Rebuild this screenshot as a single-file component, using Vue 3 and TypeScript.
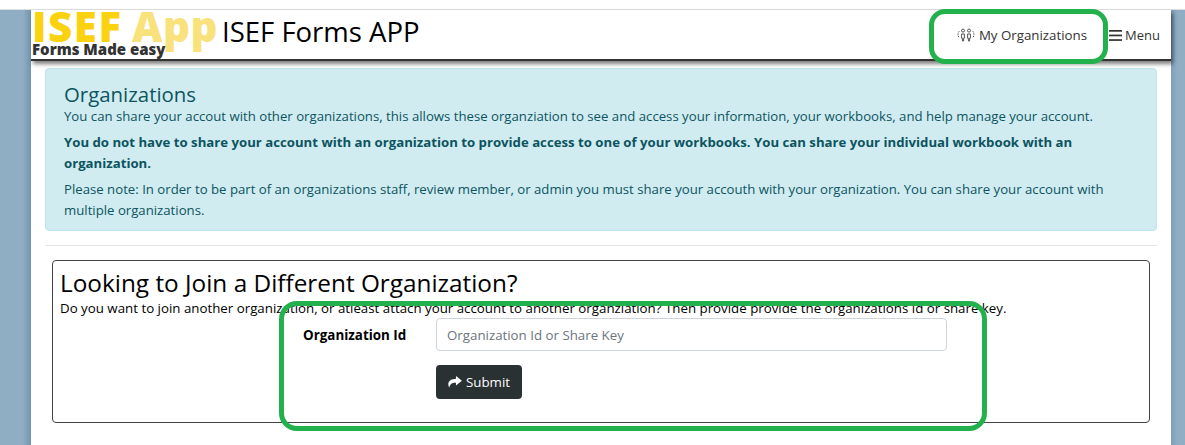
<script setup lang="ts">
const title = 'ISEF Forms APP'
</script>

<template>
  <div class="page">
    <div class="top-strip"></div>
    <div class="shell">
      <header class="navbar">
        <div class="logo" aria-label="ISEF App logo">
          <span class="logo-isef">ISEF</span>
          <span class="logo-app">App</span>
          <span class="logo-tag">Forms Made easy</span>
        </div>
        <div class="brand">{{ title }}</div>
        <nav class="nav">
          <a class="nav-link orgs">
            <svg class="ic-org" viewBox="0 0 18 14" width="18" height="14" fill="none" stroke="#555" stroke-width="1">
              <circle cx="6" cy="2.6" r="1.5" />
              <circle cx="12" cy="2.6" r="1.5" />
              <path d="M4.6 6h2.8v4.2H6.6V13H5.4v-2.8h-.8zM10.6 6h2.8v4.2h-.8V13h-1.2v-2.8h-.8z" />
              <path d="M2.2 3.2C.6 5 .6 8 2.4 10M15.8 3.2c1.6 1.8 1.6 4.8-.2 6.8" stroke-dasharray="1.4 1" />
            </svg>
            My Organizations
          </a>
          <a class="nav-link menu">
            <svg viewBox="0 0 13 11" width="13" height="11" fill="#333"><rect y="0" width="13" height="1.7" /><rect y="4.6" width="13" height="1.7" /><rect y="9.2" width="13" height="1.7" /></svg>
            Menu
          </a>
        </nav>
      </header>

      <main class="content">
        <section class="alert">
          <h4>Organizations</h4>
          <p class="first">You can share your accout with other organizations, this allows these organziation to see and access your information, your workbooks, and help manage your account.</p>
          <p class="strong">You do not have to share your account with an organization to provide access to one of your workbooks. You can share your individual workbook with an organization.</p>
          <p class="note">Please note: In order to be part of an organizations staff, review member, or admin you must share your accouth with your organization. You can share your account with multiple organizations.</p>
        </section>
        <hr />
        <section class="card">
          <h3>Looking to Join a Different Organization?</h3>
          <p class="lead">Do you want to join another organization, or atleast attach your account to another organziation? Then provide provide the organizations id or share key.</p>
          <form class="form" @submit.prevent>
            <label for="org">Organization Id</label>
            <input id="org" type="text" placeholder="Organization Id or Share Key" />
            <button type="submit">
              <svg viewBox="0 0 16 13" width="15" height="12" fill="#fff"><path d="M9.6 0 16 5.2 9.6 10.4V7.3C6 7.1 3.2 8.1 2.4 12.6.4 9.2.2 3.6 9.6 3.1z" /></svg>
              Submit
            </button>
          </form>
        </section>
      </main>
    </div>
    <div class="mark mark-top"></div>
    <div class="mark mark-form"></div>
  </div>
</template>

<style>
html, body { margin: 0; padding: 0; background: #fff; }
</style>

<style scoped>
.page {
  position: relative;
  width: 1185px;
  height: 445px;
  overflow: hidden;
  font-family: "Open Sans", "Noto Sans", sans-serif;
  font-size: 13.3px;
  color: #000;
}
.top-strip { height: 9px; background: #fff; border-bottom: 1px solid #e0e0e0; }
.shell {
  height: 435px;
  padding: 0 14px 0 31px;
  background: linear-gradient(90deg, #8fadc3 0, #8fadc3 23px, #7196b0 31px, #fff 31px, #fff 1171px, #7f9fb7 1171px, #8fadc3 1177px);
}
.navbar {
  display: flex;
  align-items: center;
  height: 51px;
  background: #fff;
  border-bottom: 2px solid #333;
  box-sizing: border-box;
  box-shadow: 2px 3px 4px rgba(0, 0, 0, 0.5);
  position: relative;
}
.logo { position: relative; width: 190px; height: 49px; flex: none; font-weight: 800; }
.logo-isef { position: absolute; left: 1px; top: -9px; font-size: 42px; line-height: 50px; color: #fad20f; letter-spacing: 1.5px; }
.logo-app { position: absolute; left: 101px; top: -9px; font-size: 42px; line-height: 50px; color: #f9e27c; letter-spacing: 0.5px; }
.logo-tag { position: absolute; left: 1px; top: 30px; font-size: 15px; line-height: 18px; color: #333; white-space: nowrap; }
.brand { font-size: 27.5px; line-height: 32px; margin-top: -6px; margin-left: 1px; white-space: nowrap; }
.nav { margin-left: auto; display: flex; align-items: center; padding-right: 11px; padding-top: 1px; }
.nav-link { display: flex; align-items: center; color: #333; white-space: nowrap; line-height: 20px; }
.orgs { gap: 4px; margin-right: 22px; }
.menu { gap: 3px; font-size: 13px; }
.content { padding: 7px 14px 0; }
.alert {
  box-sizing: border-box;
  height: 163px;
  padding: 12px 18px;
  background: #d1ecf1;
  border: 1px solid #bee5eb;
  border-radius: 4px;
  color: #0c5460;
  font-size: 13.2px;
}
.alert h4 { margin: 0; font-size: 20.4px; line-height: 26px; font-weight: 400; }
.alert p { margin: 0; line-height: 21px; }
.alert .first { line-height: 18px; margin-bottom: 7px; }
.alert .strong { font-weight: 700; margin-bottom: 5px; }
hr { border: 0; border-top: 1px solid #e4e4e4; margin: 14px 0 14px; }
.card {
  box-sizing: border-box;
  height: 163px;
  margin: 0 7px;
  padding: 7px 7px;
  border: 1px solid #444;
  border-radius: 4px;
}
.card h3 { margin: 0 0 2px; font-size: 24.35px; line-height: 29px; font-weight: 400; }
.lead { margin: 0; line-height: 18px; white-space: nowrap; }
.form {
  display: grid;
  grid-template-columns: 133px 511px;
  row-gap: 14px;
  margin: 1px 0 0 243px;
  align-items: center;
}
label { font-weight: 700; line-height: 20px; font-size: 13.4px; }
input {
  box-sizing: border-box;
  height: 33px;
  padding: 0 10px;
  border: 1px solid #ced4da;
  border-radius: 4px;
  font: inherit;
  outline: none;
}
input::placeholder { color: #6c757d; opacity: 1; }
button {
  grid-column: 2;
  justify-self: start;
  display: flex;
  align-items: center;
  gap: 4px;
  height: 34px;
  padding: 0 12px 0 11px;
  background: #2a3132;
  color: #fff;
  border: 0;
  border-radius: 4px;
  font: inherit;
}
.mark { position: absolute; border: 5px solid #22b14c; box-sizing: border-box; pointer-events: none; }
.mark-top { left: 929px; top: 9px; width: 179px; height: 55px; border-radius: 16px; }
.mark-form { left: 279px; top: 301px; width: 708px; height: 130px; border-radius: 18px; }
</style>
